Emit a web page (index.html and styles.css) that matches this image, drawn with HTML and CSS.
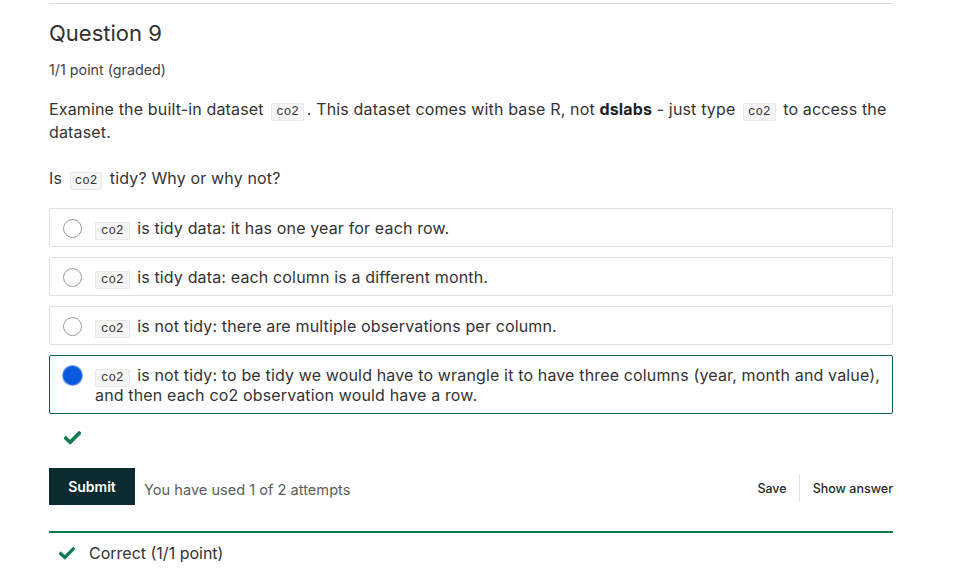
FILE: index.html
```html
<!DOCTYPE html>
<html>
<head>
<meta charset="utf-8">
<link rel="stylesheet" href="styles.css">
</head>
<body>
<div class="problem">
  <h3 class="title">Question 9</h3>
  <div class="points">1/1 point (graded)</div>
  <p class="para">Examine the built-in dataset <code>co2</code>. This dataset comes with base R, not <strong>dslabs</strong> - just type <code>co2</code> to access the dataset.</p>
  <p class="para q">Is <code>co2</code> tidy? Why or why not?</p>
  <div class="options">
    <label class="option"><span class="radio"></span><span class="label"><code>co2</code> is tidy data: it has one year for each row.</span></label>
    <label class="option"><span class="radio"></span><span class="label"><code>co2</code> is tidy data: each column is a different month.</span></label>
    <label class="option"><span class="radio"></span><span class="label"><code>co2</code> is not tidy: there are multiple observations per column.</span></label>
    <label class="option selected"><span class="radio checked"></span><span class="label"><code>co2</code> is not tidy: to be tidy we would have to wrangle it to have three columns (year, month and value), and then each co2 observation would have a row.</span></label>
  </div>
  <div class="status">
    <svg width="17" height="14" viewBox="0 0 17 14"><path d="M1.8 7.2 L6.2 11.3 L15.2 2.2" fill="none" stroke="#0e7c4f" stroke-width="3.6" stroke-linecap="square"/></svg>
  </div>
  <div class="actions">
    <button class="submit">Submit</button>
    <span class="attempts">You have used 1 of 2 attempts</span>
    <div class="right">
      <span class="link">Save</span>
      <span class="sep"></span>
      <span class="link">Show answer</span>
    </div>
  </div>
  <div class="notice">
    <svg width="16" height="13" viewBox="0 0 17 14"><path d="M1.8 7.2 L6.2 11.3 L15.2 2.2" fill="none" stroke="#0e7c4f" stroke-width="3.6" stroke-linecap="square"/></svg>
    <span>Correct (1/1 point)</span>
  </div>
</div>
</body>
</html>
```
FILE: styles.css
```css
html, body {
  margin: 0;
  padding: 0;
  background: #fff;
}
body {
  font-family: Inter, "Noto Sans", sans-serif;
  color: #454545;
}
.problem {
  width: 844px;
  margin-left: 49px;
  margin-top: 3px;
  border-top: 1px solid #dcdcdc;
}
.title {
  margin: 15px 0 0 0;
  font-size: 22px;
  font-weight: 400;
  line-height: 28px;
  color: #313131;
}
.points {
  margin-top: 13px;
  font-size: 14.3px;
  line-height: 20px;
  color: #454545;
}
.para {
  margin: 18px 0 0 0;
  font-size: 16px;
  letter-spacing: 0.15px;
  line-height: 23px;
  color: #333;
}
.para.q {
  margin-top: 23px;
}
strong {
  font-weight: 700;
  color: #222;
}
code {
  font-family: "Liberation Mono", "DejaVu Sans Mono", monospace;
  font-size: 12.5px;
  line-height: 14px;
  letter-spacing: 0;
  background: #f5f5f5;
  border: 1px solid #e8e8e8;
  border-radius: 2px;
  padding: 1px 4px;
  color: #333;
  margin: 0 3px;
}
.options {
  margin-top: 18px;
  display: flex;
  flex-direction: column;
  gap: 10px;
}
.option {
  display: flex;
  align-items: flex-start;
  border: 1px solid #e0e0e0;
  border-radius: 2px;
  padding: 9px 12px 8px 13px;
  font-size: 16px;
  letter-spacing: 0.15px;
  line-height: 20px;
  color: #333;
}
.option.selected {
  border-color: #0b6357;
}
.radio {
  flex: none;
  width: 17px;
  height: 17px;
  border: 1px solid #9a9a9a;
  border-radius: 50%;
  margin: 1px 13px 0 0;
  background: #fff;
}
.radio.checked {
  background: #0a5ae0;
  border-color: #0a5ae0;
  box-shadow: 0 0 0 1px #7fa6ea;
}
.label code {
  margin-left: 0;
  padding: 1px 5px;
}
.status {
  height: 18px;
  margin-top: 15px;
  padding-left: 15px;
}
.actions {
  margin-top: 21px;
  display: flex;
  align-items: center;
}
.submit {
  background: #0b2b30;
  color: #fff;
  border: none;
  font-family: Inter, sans-serif;
  font-size: 14px;
  font-weight: 600;
  width: 86px;
  height: 37px;
  border-radius: 0;
  padding: 0;
}
.attempts {
  margin-left: 9px;
  margin-top: 6px;
  font-size: 14.6px;
  color: #5b5b5b;
}
.right {
  margin-left: auto;
  display: flex;
  align-items: center;
  margin-top: 3px;
}
.link {
  font-size: 12.5px;
  color: #1d2a2e;
  font-weight: 500;
}
.sep {
  width: 1px;
  height: 28px;
  background: #e4e4e4;
  margin: 0 13px 0 12px;
}
.notice {
  margin-top: 26px;
  border-top: 2px solid #0e7c4f;
  display: flex;
  align-items: center;
  padding: 10px 0 0 10px;
  font-size: 16px;
  color: #333;
}
.notice span {
  margin-left: 14px;
}
```
